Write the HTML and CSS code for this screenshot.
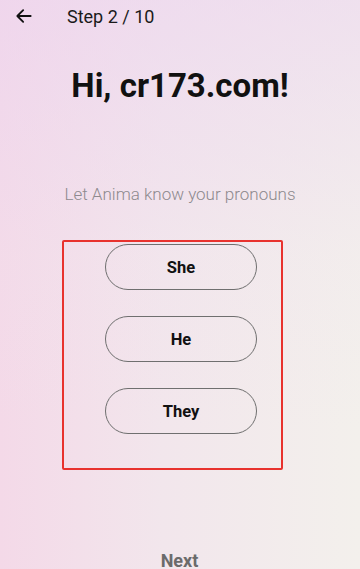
FILE: index.html
```html
<!DOCTYPE html>
<html lang="en">
<head>
    <meta charset="UTF-8">
    <meta name="viewport" content="width=device-width, initial-scale=1.0">
    <title>Step 2 / 10</title>
    <link rel="stylesheet" href="styles.css">
</head>
<body>
    <div class="topbar">
        <svg class="back" width="20" height="20" viewBox="0 0 24 24">
            <path d="M20 12H5M11 5l-7 7 7 7" fill="none" stroke="#111" stroke-width="2.2" stroke-linecap="round" stroke-linejoin="round"/>
        </svg>
        <span class="step">Step 2 / 10</span>
    </div>

    <h1 class="title">Hi, cr173.com!</h1>
    <p class="subtitle">Let Anima know your pronouns</p>

    <div class="choices">
        <button class="choice">She</button>
        <button class="choice">He</button>
        <button class="choice">They</button>
    </div>

    <div class="footer">
        <span class="next">Next</span>
    </div>
</body>
</html>
```

FILE: styles.css
```css
html, body {
    height: 100%;
}
body {
    margin: 0;
    font-family: Roboto, 'Noto Sans', sans-serif;
    color: #111;
    background:
        linear-gradient(180deg, rgba(236, 212, 240, 0.55) 0%, rgba(240, 225, 238, 0.2) 45%, rgba(243, 240, 234, 0) 75%),
        linear-gradient(90deg, #f4d9e8 0%, #f2e6ec 45%, #f3f0ec 100%);
    overflow: hidden;
}
.topbar {
    display: flex;
    align-items: center;
    height: 32px;
    padding: 0 0 0 14px;
}
.back {
    display: block;
    margin-right: 33px;
}
.step {
    font-size: 18px;
    color: #1a1a1a;
}
.title {
    margin: 34px 0 0;
    text-align: center;
    font-size: 33px;
    font-weight: 700;
    line-height: 40px;
}
.subtitle {
    margin: 78px 0 0;
    text-align: center;
    font-size: 17px;
    font-weight: 300;
    color: #8e8a8e;
    line-height: 20px;
}
.choices {
    display: flex;
    flex-direction: column;
    align-items: flex-start;
    gap: 26px;
    width: 176px;
    margin: 36px 0 0 62px;
    padding: 2px 0 34px 41px;
    border: 2px solid #e8322e;
    border-radius: 2px;
}
.choice {
    width: 152px;
    height: 46px;
    background: transparent;
    border: 1.5px solid #6f6f6f;
    border-radius: 23px;
    font-family: Roboto, 'Noto Sans', sans-serif;
    font-size: 16.5px;
    font-weight: 700;
    color: #111;
}
.footer {
    text-align: center;
    margin-top: 80px;
    padding-right: 1px;
}
.next {
    font-size: 18px;
    font-weight: 700;
    color: #6b6b6b;
}
```
